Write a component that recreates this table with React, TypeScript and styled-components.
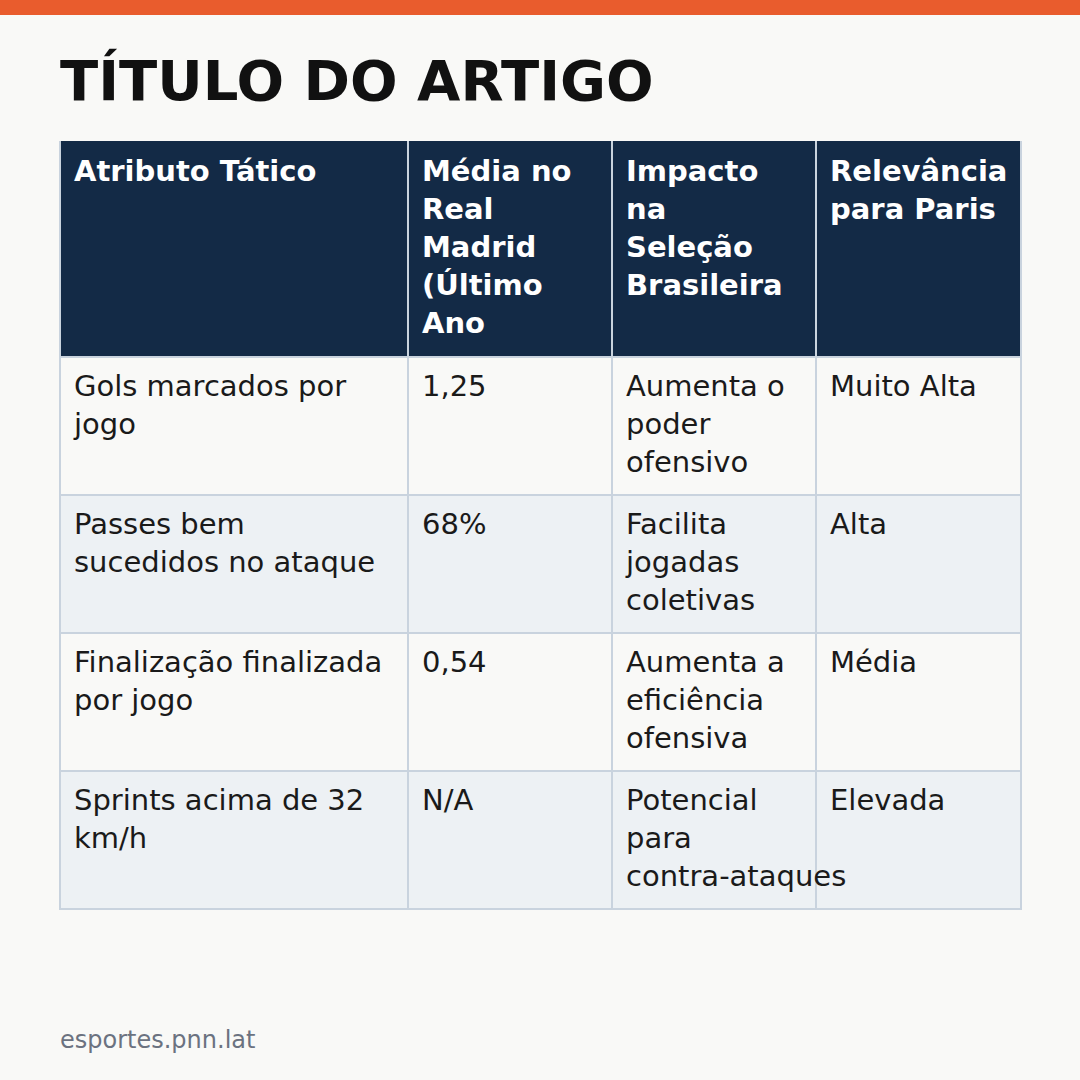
import React from "react";
import styled, { createGlobalStyle } from "styled-components";

const Global = createGlobalStyle`
  html, body { margin: 0; padding: 0; background: #f9f9f7; }
  body { font-family: "DejaVu Sans", "Noto Sans", sans-serif; color: #1a1a1a; }
`;

const Page = styled.div`
  width: 1080px;
  height: 1080px;
  display: flex;
  flex-direction: column;
  background: #f9f9f7;
  box-sizing: border-box;
`;

const TopBar = styled.div`
  height: 15px;
  background: #e95c2d;
  flex: none;
`;

const Content = styled.main`
  flex: 1;
  display: flex;
  flex-direction: column;
  padding: 0 60px 0 59px;
`;

const Title = styled.h1`
  margin: 32px 0 0 1px;
  font-size: 56px;
  line-height: 68px;
  font-weight: 700;
  color: #111;
`;

const Table = styled.table`
  margin-top: 26px;
  width: 961px;
  border-collapse: collapse;
  table-layout: fixed;
  font-size: 29px;
  line-height: 38px;
`;

const HeadCell = styled.th<{ $narrow?: boolean }>`
  background: #132a46;
  color: #ffffff;
  font-weight: 700;
  text-align: left;
  vertical-align: top;
  padding: 11px ${(p) => (p.$narrow ? "16px" : "12px")} 14px 13px;
  border: 2px solid #c9d3de;
  border-top: none;
`;

const Row = styled.tr<{ $alt: boolean }>`
  background: ${(p) => (p.$alt ? "#edf1f4" : "#f9f9f7")};
`;

const Cell = styled.td`
  vertical-align: top;
  padding: 9px 12px 13px 13px;
  border: 2px solid #c9d3de;
  height: 114px;
  overflow: visible;
  color: #1a1a1a;
`;

const NoWrap = styled.span`
  white-space: nowrap;
`;

const Footer = styled.footer`
  margin-top: auto;
  margin-bottom: 26px;
  margin-left: 1px;
  font-size: 24px;
  color: #6b7280;
`;

const headers = [
  "Atributo Tático",
  "Média no Real Madrid (Último Ano",
  "Impacto na Seleção Brasileira",
  "Relevância para Paris",
];

const rows: React.ReactNode[][] = [
  ["Gols marcados por jogo", "1,25", "Aumenta o poder ofensivo", "Muito Alta"],
  ["Passes bem sucedidos no ataque", "68%", "Facilita jogadas coletivas", "Alta"],
  ["Finalização finalizada por jogo", "0,54", "Aumenta a eficiência ofensiva", "Média"],
  [
    "Sprints acima de 32 km/h",
    "N/A",
    <>
      Potencial para <NoWrap>contra-ataques</NoWrap>
    </>,
    "Elevada",
  ],
];

const widths = [348, 204, 204, 205];

export default function App() {
  return (
    <>
      <Global />
      <Page>
        <TopBar />
        <Content>
          <Title>TÍTULO DO ARTIGO</Title>
          <Table>
            <colgroup>
              {widths.map((w, i) => (
                <col key={i} style={{ width: w }} />
              ))}
            </colgroup>
            <thead>
              <tr>
                {headers.map((h, i) => (
                  <HeadCell key={h} $narrow={i === 2}>
                    {h}
                  </HeadCell>
                ))}
              </tr>
            </thead>
            <tbody>
              {rows.map((r, i) => (
                <Row key={i} $alt={i % 2 === 1}>
                  {r.map((c, j) => (
                    <Cell key={j}>{c}</Cell>
                  ))}
                </Row>
              ))}
            </tbody>
          </Table>
          <Footer>esportes.pnn.lat</Footer>
        </Content>
      </Page>
    </>
  );
}
